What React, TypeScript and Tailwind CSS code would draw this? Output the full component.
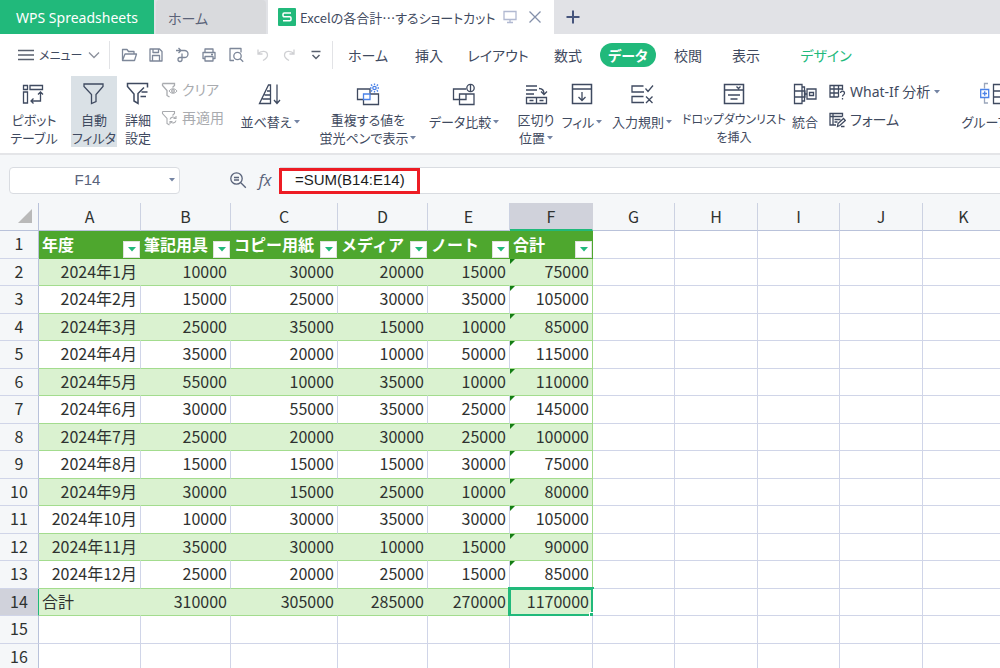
import React, { useState } from "react";

interface IconProps {
  children: React.ReactNode;
  size?: number;
  className?: string;
}

function Icon({ children, size = 24, className = "" }: IconProps) {
  return (
    <svg
      width={size}
      height={size}
      viewBox={`0 0 ${size} ${size}`}
      fill="none"
      stroke="currentColor"
      strokeWidth="1.3"
      className={`shrink-0 ${className}`}
      aria-hidden="true"
    >
      {children}
    </svg>
  );
}

function Caret() {
  return (
    <svg width="6" height="4" viewBox="0 0 6 4" fill="currentColor" className="inline-block shrink-0 text-[#7484a3]">
      <path d="M0 0h6L3 3.500z" />
    </svg>
  );
}

interface RibbonButtonProps {
  icon: React.ReactNode;
  lines: string[];
  width: string;
  caret?: boolean;
  active?: boolean;
  small?: boolean;
}

function RibbonButton({ icon, lines, width, caret, active, small }: RibbonButtonProps) {
  return (
    <button
      className={`flex flex-col items-center shrink-0 h-[71px] pt-[6px] leading-[18px] whitespace-nowrap ${width} ${
        active ? "bg-[#dae1e6]" : ""
      } ${small ? "text-xs leading-[18px]" : "text-[13px]"}`}
    >
      {icon}
      <span className={`flex flex-col items-center ${lines.length > 1 ? "mt-[5px]" : "mt-[7px]"}`}>
        {lines.map((line, i) => (
          <span key={line} className="flex items-center gap-[2px]">
            {line}
            {caret && i === lines.length - 1 && <Caret />}
          </span>
        ))}
      </span>
    </button>
  );
}

interface SmallButtonProps {
  icon: React.ReactNode;
  label: string;
  caret?: boolean;
  disabled?: boolean;
}

function SmallButton({ icon, label, caret, disabled }: SmallButtonProps) {
  return (
    <button
      disabled={disabled}
      className={`flex items-center gap-1 h-7 text-sm leading-5 whitespace-nowrap ${disabled ? "text-[#a9abaf]" : ""}`}
    >
      {icon}
      {label}
      {caret && <Caret />}
    </button>
  );
}

const tabs = [
  { name: "ホーム", style: "w-[60px]" },
  { name: "挿入", style: "w-[62px]" },
  { name: "レイアウト", style: "w-[76px]" },
  { name: "数式", style: "w-[64px]" },
  { name: "データ", style: "w-[56px]" },
  { name: "校閲", style: "w-[64px]" },
  { name: "表示", style: "w-[52px]" },
  { name: "デザイン", style: "w-[108px] text-[#21b97b]" },
];

const columns = [
  { name: "A", width: "w-[102px]" },
  { name: "B", width: "w-[90px]" },
  { name: "C", width: "w-[107px]" },
  { name: "D", width: "w-[90px]" },
  { name: "E", width: "w-[82px]" },
  { name: "F", width: "w-[83px]" },
  { name: "G", width: "w-[82px]" },
  { name: "H", width: "w-[83px]" },
  { name: "I", width: "w-[82px]" },
  { name: "J", width: "w-[83px]" },
  { name: "K", width: "" },
];

const rows: string[][] = [
  ["年度", "筆記用具", "コピー用紙", "メディア", "ノート", "合計"],
  ["2024年1月", "10000", "30000", "20000", "15000", "75000"],
  ["2024年2月", "15000", "25000", "30000", "35000", "105000"],
  ["2024年3月", "25000", "35000", "15000", "10000", "85000"],
  ["2024年4月", "35000", "20000", "10000", "50000", "115000"],
  ["2024年5月", "55000", "10000", "35000", "10000", "110000"],
  ["2024年6月", "30000", "55000", "35000", "25000", "145000"],
  ["2024年7月", "25000", "20000", "30000", "25000", "100000"],
  ["2024年8月", "15000", "15000", "15000", "30000", "75000"],
  ["2024年9月", "30000", "15000", "25000", "10000", "80000"],
  ["2024年10月", "10000", "30000", "35000", "30000", "105000"],
  ["2024年11月", "35000", "30000", "10000", "15000", "90000"],
  ["2024年12月", "25000", "20000", "25000", "15000", "85000"],
  ["合計", "310000", "305000", "285000", "270000", "1170000"],
  [],
  [],
];

function TitleBar() {
  return (
    <div className="flex h-[34px] bg-[#e1e2e6] text-sm overflow-hidden">
      <button className="w-[154px] pt-[3px] shrink-0 bg-[#21b97b] text-white whitespace-nowrap">WPS Spreadsheets</button>
      <button className="w-[110px] ml-[2px] pl-3 pt-1 shrink-0 rounded-t-sm bg-[#d9dadd] text-left text-[#5b6378]">ホーム</button>
      <div className="flex items-center w-[286px] ml-[2px] pl-[10px] shrink-0 bg-white">
        <svg width="18" height="18" viewBox="0 0 18 18" className="shrink-0">
          <rect width="18" height="18" rx="1" fill="#21b97b" />
          <path d="M13 5H6.200a1.200 1.200 0 0 0-1.200 1.200V7.500A1.200 1.200 0 0 0 6.200 8.700h5.600A1.200 1.200 0 0 1 13 9.900v1.600a1.200 1.200 0 0 1-1.200 1.200H5" fill="none" stroke="#fff" strokeWidth="1.5" />
        </svg>
        <span className="ml-1 pt-[2px] w-[198px] text-[13px] whitespace-nowrap font-['Noto_Sans_CJK_JP',sans-serif]">
          Excelの各合計…するショートカット
        </span>
        <Icon size={16} className="ml-1 text-[#b1b9d1]">
          <path d="M2 2.500h12v8H2zM8 10.500v3M5 13.500h6" />
        </Icon>
        <button aria-label="閉じる" className="ml-[10px] text-[#8490aa]">
          <Icon size={14}>
            <path d="M1.500 1.500l11 11M12.500 1.500l-11 11" />
          </Icon>
        </button>
      </div>
      <button aria-label="新規" className="ml-[12px] text-[#46557c]">
        <Icon size={14}>
          <path d="M7 .5v13M.5 7h13" strokeWidth="2" />
        </Icon>
      </button>
    </div>
  );
}

function MenuBar({ tab, onSelect }: { tab: string; onSelect: (name: string) => void }) {
  return (
    <div className="flex items-center h-[42px] text-sm whitespace-nowrap overflow-hidden">
      <button className="flex items-center shrink-0 w-[110px] h-7 pl-[17px] text-[13px] border-r border-[#e2e3e6]">
        <Icon size={18} className="text-[#59606e]">
          <path d="M1 4.500h16M1 9h16M1 13.500h16" />
        </Icon>
        <span className="ml-1 w-[44px] pt-[2px] text-left text-xs">メニュー</span>
        <Icon size={12} className="ml-[5px] text-[#8c919c]">
          <path d="M1 3.500l5 5 5-5" />
        </Icon>
      </button>
      <div className="flex items-center justify-between shrink-0 w-[223px] h-7 pl-[10px] pr-[7px] border-r border-[#e2e3e6] text-[#7d8799]">
        <button aria-label="開く">
          <Icon size={18}>
            <path d="M2.500 14.500v-11h4.500l1.500 2h5.500v2.500M2.500 14.500l2.500-6.500h11.500l-2 6.500z" strokeLinejoin="round" />
          </Icon>
        </button>
        <button aria-label="保存">
          <Icon size={18}>
            <path d="M3 3h9.500l2.500 2.500V15H3zM6 3v3.500h5.500V3M5.500 15V9.500h7V15" strokeLinejoin="round" />
          </Icon>
        </button>
        <button aria-label="出力">
          <Icon size={18}>
            <path d="M3 4.500h8.500a3.500 3.500 0 0 1 0 7H9M5.500 2L8 4.500 5.500 7M9 7.500v6a2 2 0 1 1-2-2h2" />
          </Icon>
        </button>
        <button aria-label="印刷">
          <Icon size={18}>
            <path d="M5 6.500V3h8v3.500M5 12.500H3v-6h12v6h-2M5 10.500h8V15H5zM11 8.500h2" strokeLinejoin="round" />
          </Icon>
        </button>
        <button aria-label="印刷プレビュー">
          <Icon size={18}>
            <path d="M7 14.500H3v-12h11v4" strokeLinejoin="round" />
            <circle cx="10.500" cy="10" r="3.700" />
            <path d="M13.200 12.700l3 3" />
          </Icon>
        </button>
        <button aria-label="元に戻す" disabled className="text-[#cfd0d3]">
          <Icon size={18}>
            <path d="M4 3.500v4.500h4.500M4 8c3-4 9.500-3.500 9.500 1.200 0 2.300-2 3.800-4.500 5.300" />
          </Icon>
        </button>
        <button aria-label="やり直し" disabled className="text-[#cfd0d3]">
          <Icon size={18}>
            <path d="M14 3.500v4.500H9.500M14 8C11 4 4.500 4.500 4.500 9.200c0 2.300 2 3.800 4.500 5.300" />
          </Icon>
        </button>
        <button aria-label="その他" className="text-[#59606e]">
          <Icon size={18}>
            <path d="M4.500 5.500h9M5.500 9l3.500 3.500L12.500 9" strokeWidth="1.500" />
          </Icon>
        </button>
      </div>
      <nav className="flex items-center ml-[5px]">
        {tabs.map((t) => (
          <button
            key={t.name}
            onClick={() => onSelect(t.name)}
            className={`shrink-0 h-6 leading-[26px] ${t.style} ${
              tab === t.name ? "rounded-full bg-[#21b97b] font-bold text-white" : ""
            }`}
          >
            {t.name}
          </button>
        ))}
      </nav>
    </div>
  );
}

function Ribbon() {
  return (
    <div className="flex h-[79px] border-b-2 border-[#e4e5e8] overflow-hidden">
      <RibbonButton
        width="w-[68px]"
        lines={["ピボット", "テーブル"]}
        icon={
          <Icon>
            <path d="M1.500 3.500h4v4h-4zM8 3.500h12.500v4H8zM1.500 10h4v11h-4zM18.500 10v9H9M16 12.500l2.500-2.500 2.500 2.500M11.500 16.500L9 19l2.500 2.500" />
          </Icon>
        }
      />
      <RibbonButton
        active
        width="w-[46px] mx-[3px]"
        lines={["自動", "フィルタ"]}
        icon={
          <Icon>
            <path d="M2 2h19v2.500L14 12.500v7L9.500 21.500v-9L2 4.500z" />
          </Icon>
        }
      />
      <RibbonButton
        width="w-[36px]"
        lines={["詳細", "設定"]}
        icon={
          <Icon>
            <path d="M21.500 5.500V1.500H1.500V4.500l6.500 7.500v7l4 2.500v-10L18 5.500M15.500 10h6M14.500 14.500h5.500" strokeWidth="1.500" />
          </Icon>
        }
      />
      <div className="flex flex-col shrink-0 w-[72px] ml-1">
        <SmallButton
          disabled
          label="クリア"
          icon={
            <Icon size={18}>
              <path d="M2.500 2.500h12v2l-2 2M2.500 2.500v2l4.500 5v5l2.500 1.500" />
              <circle cx="13" cy="10" r="1.300" />
              <path d="M9 10c2-3 6-3 8 0-2 3-6 3-8 0z" strokeWidth="1" />
            </Icon>
          }
        />
        <SmallButton
          disabled
          label="再適用"
          icon={
            <Icon size={18}>
              <path d="M2.500 2.500h12v2l-2 2M2.500 2.500v2l4.500 5v5l2.500 1.500M10 10.500a3 3 0 0 1 5.500-1M16 7v2.500h-2.500M16 11.500a3 3 0 0 1-5.500 1M10 15v-2.500h2.500" strokeWidth="1.100" />
            </Icon>
          }
        />
      </div>
      <RibbonButton
        width="w-[76px]"
        caret
        lines={["並べ替え"]}
        icon={
          <Icon>
            <path d="M1.500 21.500L10.500 3h2v18.500zM9 9h3.500M6.500 13h6M4.500 17h8M19 2.500v18.500M16 18l3 3.500 3-3.500" />
          </Icon>
        }
      />
      <RibbonButton
        width="w-[120px]"
        caret
        lines={["重複する値を", "蛍光ペンで表示"]}
        icon={
          <Icon>
            <path d="M7 17.500H1.500V7H14v5M7.500 17.500v5H22.500V12H14" />
            <g stroke="#4b82e8">
              <path d="M7.500 12H14v5.500H7.500zM18.500 1.500V3M18.500 9v1.500M14 6h1.500M21.500 6H23M15 2.500l1.200 1.200M22 2.500l-1.200 1.200M15 9.500l1.200-1.200M22 9.500l-1.200-1.200" />
              <circle cx="18.500" cy="6" r="1.700" />
            </g>
          </Icon>
        }
      />
      <RibbonButton
        width="w-[72px]"
        caret
        lines={["データ比較"]}
        icon={
          <Icon>
            <path d="M14 7H1.500v10.500H14V12.500M7.500 12H22v10.500H7.500zM18.500 2v8" />
            <circle cx="18.500" cy="6" r="3.700" />
          </Icon>
        }
      />
      <RibbonButton
        width="w-[52px] ml-[10px]"
        caret
        lines={["区切り", "位置"]}
        icon={
          <Icon>
            <path d="M2 4h11M2 8h11M2 12h8M15 6.500c4 0 5 2 5 5.500M17 9.500l3 3 3-3M2.500 15.500h20v6h-20zM12.500 15.500v6M5.500 18.500h4M15.500 18.500h4" />
          </Icon>
        }
      />
      <RibbonButton
        width="w-[40px]"
        caret
        lines={["フィル"]}
        icon={
          <Icon>
            <path d="M2.500 2.500h19v19h-19z" strokeWidth="1.500" />
            <path d="M2.500 7h19M12 10v8.500M8.500 15l3.500 3.500 3.500-3.500" />
          </Icon>
        }
      />
      <RibbonButton
        width="w-[80px]"
        caret
        lines={["入力規則"]}
        icon={
          <Icon>
            <path d="M13.500 4H2v6h12M13.500 14.500H2v6h12M15.500 6.500l2.500 3 5-6M16 14.500l6.500 6.500M22.500 14.500L16 21" />
          </Icon>
        }
      />
      <RibbonButton
        small
        width="w-[104px]"
        lines={["ドロップダウンリスト", "を挿入"]}
        icon={
          <Icon>
            <path d="M2.500 2.500h19v19h-19z" strokeWidth="1.500" />
            <path d="M2.500 8h19M14.500 4.500l2 2 2-2M6 13h12M8.500 17h7" />
          </Icon>
        }
      />
      <RibbonButton
        width="w-[38px]"
        lines={["統合"]}
        icon={
          <Icon>
            <path d="M1.500 2.500H9v19H1.500zM1.500 9H9M1.500 15H9M9 5h2.500v14H9M9 9h3v6H9M14 7h9v10h-9zM16.500 10.500h4v3h-4zM11 12h3" />
          </Icon>
        }
      />
      <div className="flex flex-col shrink-0 w-[126px] ml-1 pt-[2px]">
        <SmallButton
          caret
          label="What-If 分析"
          icon={
            <Icon size={18}>
              <path d="M10.500 14H2V2.500h12.500V7M2 6h12.500M2 10h8M6 2.500V14M10.500 2.500V14M12.500 10a2 2 0 1 1 3 1.800c-.8.400-1 .8-1 1.700M14.500 15v1.500" />
            </Icon>
          }
        />
        <SmallButton
          label="フォーム"
          icon={
            <Icon size={18}>
              <path d="M14.500 5.500v-3H2V14h6M2 5.500h12.500M5 2.500V14M6.500 8.500h6M6.500 11h3M9.500 15.500l.5-3 5.500-5 1.800 2-5.500 5zM13 15.500h3.500" />
            </Icon>
          }
        />
      </div>
      <RibbonButton
        width="w-[76px]"
        lines={["グループ化"]}
        icon={
          <Icon>
            <path d="M8 1.500H4.500v5M4.500 16v5H8" stroke="#9aa6bb" />
            <path d="M.7 7.500h8v8h-8zM2.500 11.500h4.500M4.700 9.200v4.500" stroke="#4b82e8" />
            <path d="M13.500 2.500H23v19h-9.500zM13.500 9H23M13.500 15H23" />
          </Icon>
        }
      />
    </div>
  );
}

function FormulaBar() {
  const [formula, setFormula] = useState("=SUM(B14:E14)");

  return (
    <div className="flex items-center h-[48px] pl-[9px] pt-[3px] font-['Liberation_Sans','Noto_Sans_CJK_JP',sans-serif] text-[15px] text-[#59637a]">
      <div className="flex items-center shrink-0 w-[171px] h-[27px] pr-1 bg-white border border-[#d9dce1] rounded-sm">
        <input aria-label="名前ボックス" defaultValue="F14" className="w-full pr-1 text-center outline-none" />
        <Caret />
      </div>
      <button aria-label="検索" className="ml-[49px]">
        <Icon size={18}>
          <circle cx="7.500" cy="7.500" r="5.700" />
          <path d="M11.800 11.800l5 5M5 6.500h5M5 9h5" />
        </Icon>
      </button>
      <button className="ml-[9px] w-[18px] font-['Open_Sans','Noto_Sans_CJK_JP',sans-serif] italic text-base">fx</button>
      <div className="relative grow h-[27px] ml-[6px] bg-white border-y border-l border-[#d9dce1]">
        <input
          aria-label="数式"
          value={formula}
          onChange={(e) => setFormula(e.target.value)}
          className="block w-full h-[24px] pl-[14px] text-[#1c1c1c] outline-none"
        />
        <div className="absolute -left-[2px] top-0 w-[141px] h-[26px] border-3 border-[#ed1c24] pointer-events-none" />
      </div>
    </div>
  );
}

function cellStyle(row: number, col: number) {
  if (col > 5 || row > 13) {
    return "border-[#d0d5e8] bg-white";
  }
  if (row === 0) {
    return "border-[#4ea72e] bg-[#4ea72e] text-white font-bold";
  }
  const right = col === 5 ? "border-r-[#a3dc8e]" : row % 2 ? "border-r-[#daf2d0]" : "border-r-[#d0d5e8]";
  return `border-b-[#a3dc8e] ${right} ${row % 2 ? "bg-[#daf2d0]" : "bg-white"}`;
}

function Cell({ row, col }: { row: number; col: number }) {
  const value = rows[row][col];
  const base = `relative border-r border-b ${cellStyle(row, col)}`;

  if (row === 0 && value) {
    return (
      <td className={`p-0 ${base}`}>
        <div className="flex items-end justify-between h-[27px] pl-[3px] leading-[26px] whitespace-nowrap">
          <span className="h-[27px]">{value}</span>
          <button aria-label={`${value} フィルタ`} className="flex items-center justify-center shrink-0 size-[17px] bg-white border border-[#dfe3df]">
            <svg width="8" height="5" viewBox="0 0 8 5" fill="#21b97b">
              <path d="M0 0h8L4 4.500z" />
            </svg>
          </button>
        </div>
      </td>
    );
  }

  return (
    <td className={`${base} pt-0 pb-[2px] ${value === "合計" ? "text-left pl-[3px] pr-0" : "text-right pl-0 pr-[3px]"}`}>
      {value}
      {col === 5 && row > 0 && row < 13 && (
        <span className="absolute left-0 top-0 border-t-5 border-r-5 border-t-[#147d14] border-r-transparent" />
      )}
      {col === 5 && row === 13 && (
        <>
          <span className="absolute -inset-[2px] border-3 border-[#21b97b]" />
          <span className="absolute -right-[3px] -bottom-[3px] size-[6px] border-t border-l border-white bg-[#21b97b]" />
        </>
      )}
    </td>
  );
}

function Sheet() {
  return (
    <table className="w-full min-w-[1005px] table-fixed border-separate border-spacing-0 text-base leading-5 text-[#2f3230]">
      <colgroup>
        <col className="w-[39px]" />
        {columns.map((c) => (
          <col key={c.name} className={c.width} />
        ))}
      </colgroup>
      <thead>
        <tr className="h-[28px]">
          <th className="p-0 border-r border-b border-[#b9c2da]">
            <svg width="14" height="14" viewBox="0 0 14 14" fill="#b9b9b9" className="ml-[18px]">
              <path d="M14 0v14H0z" />
            </svg>
          </th>
          {columns.map((c) => (
            <th
              key={c.name}
              className={`p-0 border-r font-normal ${
                c.name === "F"
                  ? "border-b-2 border-r-[#d0d2db] border-b-[#21b97b] bg-[#d0d2db]"
                  : "border-b border-r-[#ccd2e2] border-b-[#b9c2da]"
              }`}
            >
              {c.name}
            </th>
          ))}
        </tr>
      </thead>
      <tbody>
        {rows.map((_, r) => (
          <tr key={r} className={r % 2 ? "h-[27px]" : "h-[28px]"}>
            <th
              className={`px-0 pt-0 pb-[2px] border-r border-b border-b-[#d0d5e8] font-normal ${
                r === 13 ? "bg-[#d0d2db] border-r-[#21b97b]" : "border-r-[#b9c2da]"
              }`}
            >
              {r + 1}
            </th>
            {columns.map((c, i) => (
              <Cell key={c.name} row={r} col={i} />
            ))}
          </tr>
        ))}
      </tbody>
    </table>
  );
}

function App() {
  const [tab, setTab] = useState("データ");

  return (
    <div className="flex flex-col h-screen overflow-hidden bg-[#f5f7f9] text-[#3f4a60] font-['Noto_Sans','Noto_Sans_CJK_JP',sans-serif] [font-feature-settings:'palt']">
      <TitleBar />
      <div className="bg-white">
        <MenuBar tab={tab} onSelect={setTab} />
        <Ribbon />
      </div>
      <div className="grow min-h-0 overflow-hidden font-['Noto_Sans_CJK_JP',sans-serif] [font-feature-settings:normal]">
        <FormulaBar />
        <Sheet />
      </div>
    </div>
  );
}

export default App;
